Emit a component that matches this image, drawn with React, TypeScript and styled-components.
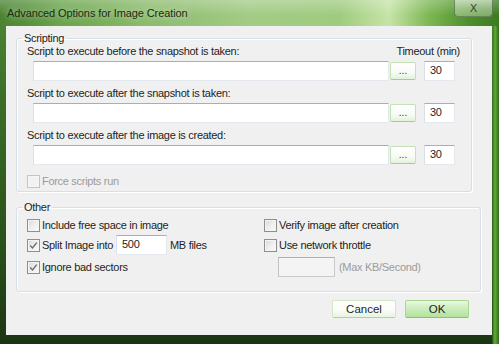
import React from "react";
import styled, { createGlobalStyle } from "styled-components";

const GlobalStyle = createGlobalStyle`
  html, body {
    margin: 0;
    padding: 0;
    width: 499px;
    height: 344px;
    overflow: hidden;
    background: #24451a;
  }
  body {
    font-family: "Liberation Sans", Arial, sans-serif;
    font-size: 11px;
    letter-spacing: -0.3px;
    color: #1e1e1e;
  }
`;

const Window = styled.div`
  width: 499px;
  height: 344px;
  display: flex;
  flex-direction: column;
  background:
    linear-gradient(to right, rgba(0, 0, 0, 0) 492px, #3d7f22 493px, #63a83c 495px, #2f6a18 499px),
    linear-gradient(to bottom, #4f8a36 0%, #3a6d27 30%, #2a5219 70%, #1b3512 100%);
`;

const TitleBar = styled.div`
  height: 26px;
  flex: none;
  display: flex;
  align-items: flex-start;
  justify-content: space-between;
  background:
    linear-gradient(to bottom, rgba(255, 255, 255, 0.25), rgba(255, 255, 255, 0) 60%),
    linear-gradient(to right, #4a8231 0%, #6aa44b 12%, #8dbc6e 30%, #a3cb86 50%, #9fcb7f 68%, #c6e4a8 78%, #7cb752 86%, #4d8e2c 94%, #3c7a22 100%);
`;

const Title = styled.div`
  padding: 7px 0 0 7px;
  font-size: 11px;
  letter-spacing: -0.1px;
  color: #1c2a14;
  text-shadow: 0 0 6px rgba(255, 255, 255, 0.7);
`;

const CloseButton = styled.div`
  width: 37px;
  height: 16px;
  margin-right: 6px;
  border: 1px solid rgba(60, 90, 50, 0.6);
  border-top: none;
  border-radius: 0 0 4px 4px;
  background: linear-gradient(to bottom, rgba(255, 255, 255, 0.55), rgba(225, 240, 215, 0.45) 50%, rgba(190, 215, 175, 0.5));
  display: flex;
  align-items: center;
  justify-content: center;
  font-family: "DejaVu Sans", sans-serif;
  font-size: 11px;
  letter-spacing: 0;
  color: #3c4a38;
`;

const Client = styled.div`
  flex: 1;
  margin: 0 7px 9px 6px;
  background: #f0f0f0;
  padding: 5px 0 0 10px;
  box-sizing: border-box;
  display: flex;
  flex-direction: column;
`;

const Group = styled.fieldset<{ $width: number }>`
  width: ${(p) => p.$width}px;
  box-sizing: border-box;
  margin: 0;
  padding: 0;
  border: 1px solid #d5dfe5;
  border-radius: 3px;
  box-shadow: inset 1px 1px 0 #ffffff, 1px 1px 0 #ffffff;
  & + & {
    margin-top: 8px;
  }
`;

const Legend = styled.legend`
  margin-left: 5px;
  padding: 0 2px;
  line-height: 14px;
`;

const ScriptBody = styled.div`
  padding: 0 16px 3px 10px;
  margin-top: -1px;
`;

const LabelRow = styled.div`
  display: flex;
  justify-content: space-between;
  line-height: 14px;
  margin-right: -5px;
`;

const FieldRow = styled.div`
  display: flex;
  align-items: center;
  margin: 3px 0 5px 6px;
`;

const TextBox = styled.div<{ $width: number; $disabled?: boolean }>`
  width: ${(p) => p.$width}px;
  height: 20px;
  box-sizing: border-box;
  background: ${(p) => (p.$disabled ? "#f4f4f4" : "#ffffff")};
  border: 1px solid ${(p) => (p.$disabled ? "#c9c9c9" : "#e3e9ef")};
  border-top-color: ${(p) => (p.$disabled ? "#afafaf" : "#abadb3")};
  border-left-color: ${(p) => (p.$disabled ? "#c2c2c2" : "#dbdfe6")};
  padding: 1px 0 0 5px;
  line-height: 15px;
`;

const Browse = styled.div`
  width: 26px;
  height: 18px;
  margin-left: 1px;
  box-sizing: border-box;
  border: 1px solid #c3e2b6;
  border-bottom-color: #9fd18a;
  border-radius: 2px;
  background: linear-gradient(to bottom, #ffffff 0%, #f7fbf4 60%, #e3f2da 100%);
  text-align: center;
  line-height: 15px;
  font-size: 10px;
  letter-spacing: 0;
  color: #333;
`;

const Timeout = styled(TextBox)`
  margin-left: 8px;
`;

const CheckRow = styled.label<{ $disabled?: boolean }>`
  display: flex;
  align-items: center;
  line-height: 14px;
  color: ${(p) => (p.$disabled ? "#9b9b9b" : "#1e1e1e")};
  white-space: nowrap;
`;

const Box = styled.span<{ $disabled?: boolean }>`
  width: 13px;
  height: 13px;
  box-sizing: border-box;
  margin-right: 2px;
  border: 1px solid ${(p) => (p.$disabled ? "#c4c4c4" : "#8e8f8f")};
  background: ${(p) =>
    p.$disabled
      ? "#f2f2f2"
      : "linear-gradient(135deg, #d8d8d8 0%, #eeeeee 50%, #fbfbfb 100%)"};
  box-shadow: inset 0 0 0 1px ${(p) => (p.$disabled ? "#f7f7f7" : "#f4f4f4")};
  display: flex;
  align-items: center;
  justify-content: center;
  flex: none;
`;

const ScriptCheck = styled(CheckRow)`
  margin-top: 9px;
`;

const OtherBody = styled.div`
  display: grid;
  grid-template-columns: 237px 1fr;
  grid-template-rows: 16px 22px 20px;
  row-gap: 1px;
  align-items: center;
  padding: 3px 0 14px 10px;
`;

const SplitLabel = styled.span`
  width: 74px;
`;

const Suffix = styled.span<{ $muted?: boolean }>`
  margin-left: ${(p) => (p.$muted ? 4 : 3)}px;
  color: ${(p) => (p.$muted ? "#9b9b9b" : "#1e1e1e")};
`;

const Throttle = styled.div`
  display: flex;
  align-items: center;
  margin-left: 14px;
`;

const Footer = styled.div`
  display: flex;
  justify-content: flex-end;
  gap: 9px;
  padding-right: 23px;
  margin-top: 8px;
`;

const DialogButton = styled.div<{ $primary?: boolean }>`
  width: 64px;
  height: 18px;
  box-sizing: border-box;
  border: 1px solid ${(p) => (p.$primary ? "#a6d88f" : "#d0e8c6")};
  border-bottom-color: ${(p) => (p.$primary ? "#86c56a" : "#a9d896")};
  border-radius: 2px;
  background: ${(p) =>
    p.$primary
      ? "linear-gradient(to bottom, #eaf7e2 0%, #cdeebd 45%, #b2e29b 100%)"
      : "linear-gradient(to bottom, #ffffff 0%, #fafdf8 55%, #e6f4de 100%)"};
  text-align: center;
  line-height: 16px;
  font-size: 11.5px;
  letter-spacing: 0;
  color: #1e1e1e;
`;

const Check = () => (
  <svg width="9" height="9" viewBox="0 0 9 9">
    <path d="M1.2 4.6 L3.5 7 L7.8 1.6" fill="none" stroke="#6d6d6d" strokeWidth="1.4" />
  </svg>
);

const Checkbox: React.FC<{ checked?: boolean; disabled?: boolean }> = ({ checked, disabled }) => (
  <Box $disabled={disabled}>{checked && <Check />}</Box>
);

const scripts = [
  "Script to execute before the snapshot is taken:",
  "Script to execute after the snapshot is taken:",
  "Script to execute after the image is created:",
];

const App: React.FC = () => {
  return (
    <Window>
      <GlobalStyle />
      <TitleBar>
        <Title>Advanced Options for Image Creation</Title>
        <CloseButton>X</CloseButton>
      </TitleBar>
      <Client>
        <Group $width={456}>
          <Legend>Scripting</Legend>
          <ScriptBody>
            {scripts.map((text, i) => (
              <div key={text}>
                <LabelRow>
                  <span>{text}</span>
                  {i === 0 && <span>Timeout (min)</span>}
                </LabelRow>
                <FieldRow>
                  <TextBox $width={356} />
                  <Browse>...</Browse>
                  <Timeout $width={31}>30</Timeout>
                </FieldRow>
              </div>
            ))}
            <ScriptCheck $disabled>
              <Checkbox disabled />
              Force scripts run
            </ScriptCheck>
          </ScriptBody>
        </Group>
        <Group $width={465}>
          <Legend>Other</Legend>
          <OtherBody>
            <CheckRow>
              <Checkbox />
              Include free space in image
            </CheckRow>
            <CheckRow>
              <Checkbox />
              Verify image after creation
            </CheckRow>
            <CheckRow>
              <Checkbox checked />
              <SplitLabel>Split Image into</SplitLabel>
              <TextBox $width={51}>500</TextBox>
              <Suffix>MB files</Suffix>
            </CheckRow>
            <CheckRow>
              <Checkbox />
              Use network throttle
            </CheckRow>
            <CheckRow>
              <Checkbox checked />
              Ignore bad sectors
            </CheckRow>
            <Throttle>
              <TextBox $width={57} $disabled />
              <Suffix $muted>(Max KB/Second)</Suffix>
            </Throttle>
          </OtherBody>
        </Group>
        <Footer>
          <DialogButton>Cancel</DialogButton>
          <DialogButton $primary>OK</DialogButton>
        </Footer>
      </Client>
    </Window>
  );
};

export default App;
